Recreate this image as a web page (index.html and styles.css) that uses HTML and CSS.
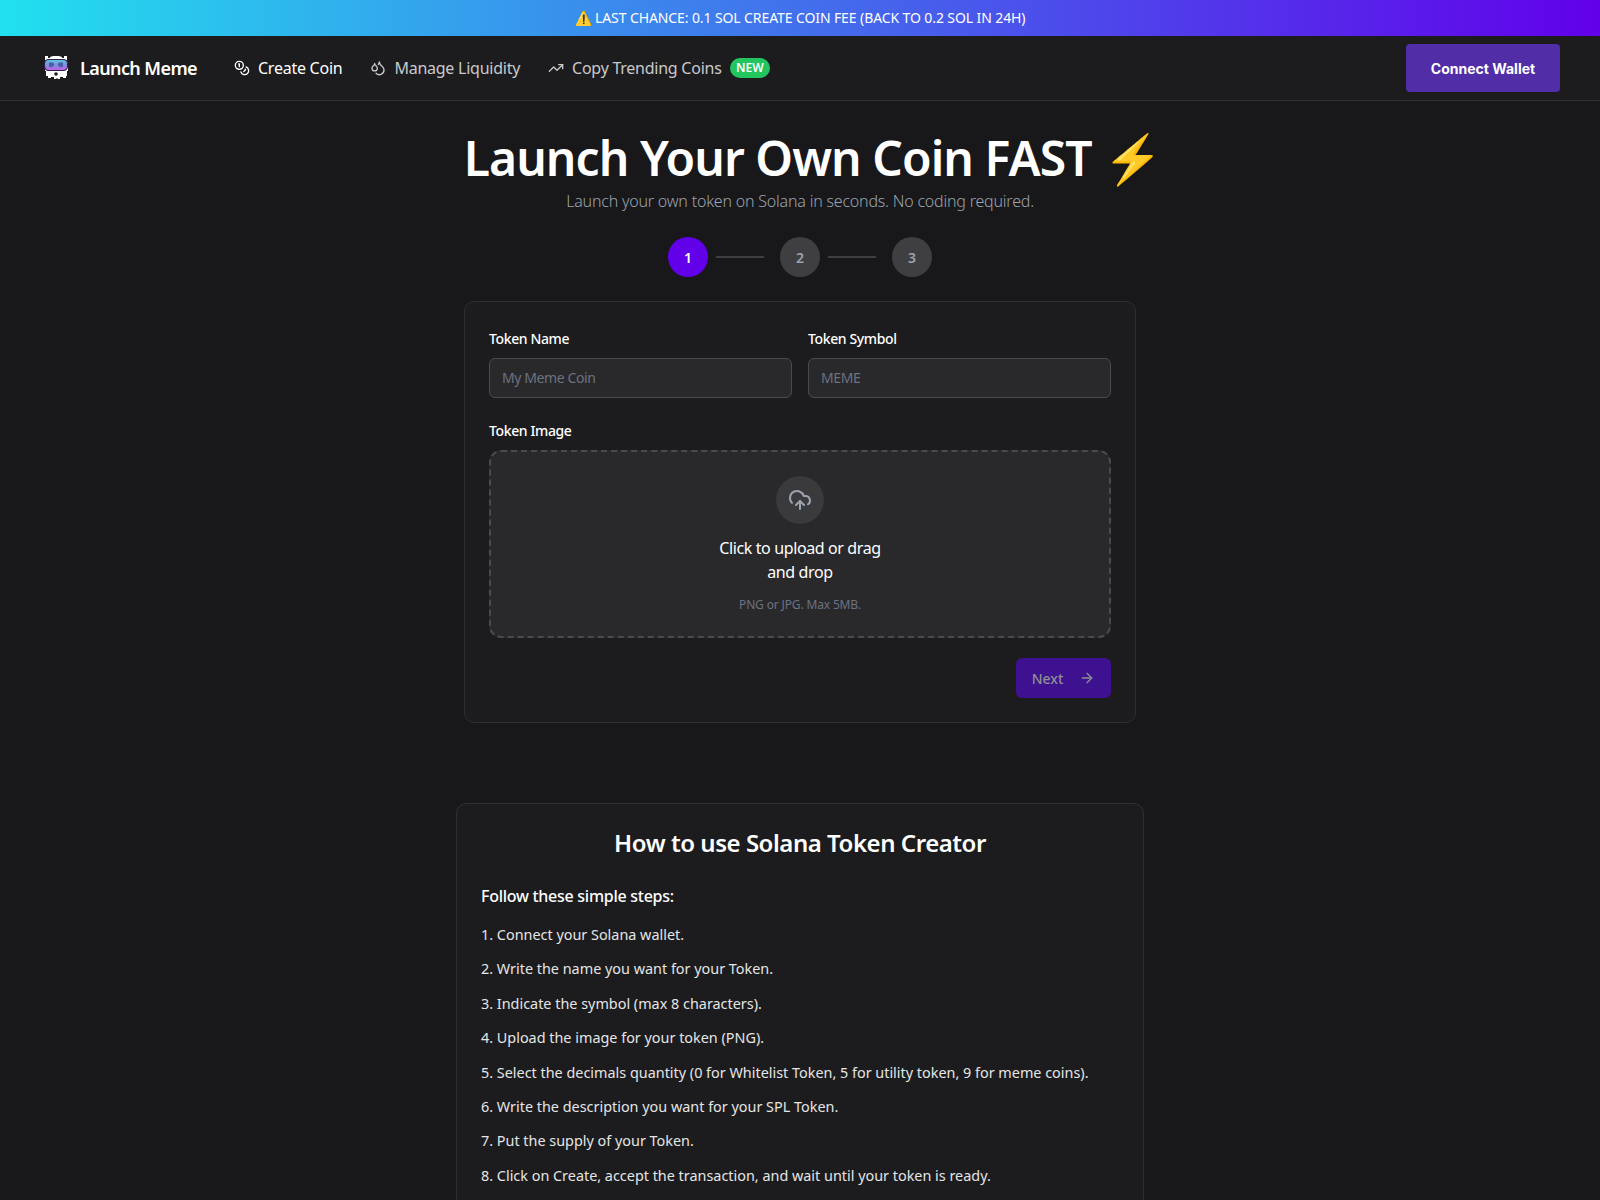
FILE: index.html
```html
<!DOCTYPE html>
<html lang="en">
<head>
    <meta charset="UTF-8">
    <meta name="viewport" content="width=device-width, initial-scale=1.0">
    <title>Launch Meme</title>
    <link rel="stylesheet" href="styles.css">
</head>
<body>
    <div class="promo">⚠️ LAST CHANCE: 0.1 SOL CREATE COIN FEE (BACK TO 0.2 SOL IN 24H)</div>
    <header class="navbar">
        <a class="brand" href="#">
            <svg class="brand-logo" viewBox="0 0 24 24" width="24" height="24">
                <defs>
                    <linearGradient id="goggle" x1="0" y1="0" x2="0" y2="1">
                        <stop offset="0" stop-color="#5fc4e0"/>
                        <stop offset="0.5" stop-color="#7f8fe0"/>
                        <stop offset="1" stop-color="#c45fe6"/>
                    </linearGradient>
                </defs>
                <path fill="#fff" d="M1 0h3v2h2V1l3-1h6l3 1v1h2V0h3v6h1v9h-1v5h-1v2h-3v-1h-3v2h-2l-1-1-1 1h-2v-2H7v1H4v-2H2v-5H1V6H0V6h1z"/>
                <rect x="0" y="3" width="24" height="12" rx="4.500" fill="#2a2048"/>
                <rect x="1" y="4" width="22" height="10" rx="4" fill="url(#goggle)"/>
                <path fill="#4a5fa8" d="M5 6.500h4l1.500 2.500-3 2.500L5 10.500zM15 6.500h4v4l-2.500 1-3-2.500z"/>
                <circle cx="12" cy="18" r="1.800" fill="#1c1c1e"/>
            </svg>
            <span>Launch Meme</span>
        </a>
        <nav class="nav-links">
            <a class="nav-link active" href="#">
                <svg viewBox="0 0 24 24"><circle cx="8" cy="8" r="6"/><path d="M18.090 10.370A6 6 0 1 1 10.340 18"/><path d="M7 6h1v4"/><path d="m16.710 13.880.7.710-2.820 2.820"/></svg>
                Create Coin
            </a>
            <a class="nav-link" href="#">
                <svg viewBox="0 0 24 24"><path d="M7 16.300c2.200 0 4-1.830 4-4.050 0-1.160-.57-2.260-1.710-3.190S7.290 6.750 7 5.300c-.29 1.450-1.140 2.840-2.290 3.760S3 11.100 3 12.250c0 2.220 1.800 4.050 4 4.050z"/><path d="M12.560 6.600A10.970 10.970 0 0 0 14 3.020c.5 2.500 2 4.900 4 6.500s3 3.500 3 5.500a6.980 6.980 0 0 1-11.910 4.970"/></svg>
                Manage Liquidity
            </a>
            <a class="nav-link" href="#">
                <svg viewBox="0 0 24 24"><path d="M22 7l-8.500 8.500-5-5L2 17"/><path d="M16 7h6v6"/></svg>
                Copy Trending Coins
                <span class="badge">NEW</span>
            </a>
        </nav>
        <button class="connect-btn">Connect Wallet</button>
    </header>

    <main class="page">
        <h1>Launch Your Own Coin FAST <span class="bolt">⚡</span></h1>
        <p class="subtitle">Launch your own token on Solana in seconds. No coding required.</p>

        <div class="stepper">
            <span class="step current">1</span>
            <span class="step-line"></span>
            <span class="step">2</span>
            <span class="step-line"></span>
            <span class="step">3</span>
        </div>

        <section class="card form-card">
            <div class="field-row">
                <div class="field">
                    <label for="token-name">Token Name</label>
                    <input id="token-name" type="text" placeholder="My Meme Coin">
                </div>
                <div class="field">
                    <label for="token-symbol">Token Symbol</label>
                    <input id="token-symbol" type="text" placeholder="MEME">
                </div>
            </div>
            <div class="field">
                <label>Token Image</label>
                <div class="dropzone">
                    <span class="upload-icon">
                        <svg viewBox="0 0 24 24"><path d="M12 13v8"/><path d="M4 14.900A7 7 0 1 1 15.710 8h1.790a4.500 4.500 0 0 1 2.500 8.240"/><path d="m8 17 4-4 4 4"/></svg>
                    </span>
                    <p class="drop-text">Click to upload or drag and drop</p>
                    <p class="drop-hint">PNG or JPG. Max 5MB.</p>
                </div>
            </div>
            <div class="form-actions">
                <button class="next-btn">Next
                    <svg viewBox="0 0 24 24"><path d="M5 12h14"/><path d="m12 5 7 7-7 7"/></svg>
                </button>
            </div>
        </section>

        <section class="card guide-card">
            <h2>How to use Solana Token Creator</h2>
            <h3>Follow these simple steps:</h3>
            <ol class="steps">
                <li>1. Connect your Solana wallet.</li>
                <li>2. Write the name you want for your Token.</li>
                <li>3. Indicate the symbol (max 8 characters).</li>
                <li>4. Upload the image for your token (PNG).</li>
                <li>5. Select the decimals quantity (0 for Whitelist Token, 5 for utility token, 9 for meme coins).</li>
                <li>6. Write the description you want for your SPL Token.</li>
                <li>7. Put the supply of your Token.</li>
                <li>8. Click on Create, accept the transaction, and wait until your token is ready.</li>
            </ol>
        </section>
    </main>
</body>
</html>
```

FILE: styles.css
```css
:root {
    --bg-color: #18181b;
    --card-color: #1c1c1e;
    --field-color: #29292c;
    --border-color: #2f2f32;
    --field-border: #4b4b4e;
    --text-color: #fff;
    --muted-color: #9ca3af;
    --faint-color: #6b7280;
    --primary-color: #6200ea;
}

* {
    box-sizing: border-box;
}

html, body {
    height: 1200px;
    overflow: hidden;
}

body {
    margin: 0;
    background-color: var(--bg-color);
    color: var(--text-color);
    font-family: 'Noto Sans', 'Open Sans', sans-serif;
}

a {
    color: inherit;
    text-decoration: none;
}

button {
    border: none;
    font-family: inherit;
}

.promo {
    height: 36px;
    display: flex;
    align-items: center;
    justify-content: center;
    padding-bottom: 1px;
    background: linear-gradient(90deg, #22e0ee, #6200ea);
    font-size: 14px;
    letter-spacing: -0.1px;
}

.navbar {
    height: 65px;
    display: flex;
    align-items: center;
    padding: 0 40px 0 44px;
    background-color: var(--card-color);
    border-bottom: 1px solid var(--border-color);
}

.brand {
    display: flex;
    align-items: center;
    gap: 12px;
    margin-right: 37px;
    font-size: 18px;
    font-weight: 600;
    letter-spacing: -0.6px;
}

.nav-links {
    display: flex;
    align-items: center;
    gap: 28px;
}

.nav-link {
    display: flex;
    align-items: center;
    gap: 8px;
    color: #c9c9cc;
    font-size: 16px;
    letter-spacing: -0.25px;
}

.nav-link.active {
    color: #fff;
}

.nav-link svg {
    width: 16px;
    height: 16px;
    fill: none;
    stroke: currentColor;
    stroke-width: 2;
    stroke-linecap: round;
    stroke-linejoin: round;
}

.badge {
    padding: 2px 6.500px;
    border-radius: 10px;
    background-color: #22c55e;
    color: #fff;
    font-size: 12px;
    font-weight: 600;
    line-height: 16px;
    letter-spacing: 0;
}

.connect-btn {
    margin-left: auto;
    width: 154px;
    height: 48px;
    border-radius: 4px;
    background-color: #512da8;
    color: #fff;
    font-family: Inter, sans-serif;
    font-size: 14px;
    font-weight: 700;
}

.page {
    display: flex;
    flex-direction: column;
    align-items: center;
}

h1 {
    margin: 27px 0 0;
    font-size: 48px;
    font-weight: 600;
    line-height: 60px;
    letter-spacing: -0.94px;
    white-space: nowrap;
}

/* the emoji hangs past the centred text in the original */
.bolt {
    margin-right: -26px;
}

.subtitle {
    margin: 1px 0 0;
    color: var(--muted-color);
    font-size: 16px;
    font-weight: 300;
    line-height: 24px;
    letter-spacing: -0.2px;
}

.stepper {
    display: flex;
    align-items: center;
    gap: 8px;
    margin-top: 24px;
}

.step {
    width: 40px;
    height: 40px;
    display: flex;
    align-items: center;
    justify-content: center;
    border-radius: 50%;
    background-color: #3f3f42;
    color: var(--muted-color);
    font-size: 14px;
    font-weight: 600;
}

.step.current {
    background-color: var(--primary-color);
    color: #fff;
}

.step-line {
    width: 48px;
    height: 2px;
    margin-right: 8px;
    background-color: #3f3f42;
}

.card {
    background-color: var(--card-color);
    border: 1px solid var(--border-color);
    border-radius: 10px;
    padding: 24px;
}

.form-card {
    width: 672px;
    margin-top: 24px;
    display: flex;
    flex-direction: column;
    gap: 20px;
}

.field-row {
    display: grid;
    grid-template-columns: 1fr 1fr;
    gap: 16px;
}

label {
    display: block;
    margin-bottom: 6px;
    font-size: 14px;
    font-weight: 500;
    line-height: 26px;
    letter-spacing: -0.38px;
}

input {
    width: 100%;
    height: 40px;
    padding: 0 12px 2px;
    background-color: var(--field-color);
    border: 1px solid var(--field-border);
    border-radius: 6px;
    color: #fff;
    font-family: inherit;
    font-size: 14px;
    letter-spacing: -0.4px;
}

input::placeholder {
    color: var(--faint-color);
}

.dropzone {
    height: 188px;
    display: flex;
    flex-direction: column;
    align-items: center;
    padding-top: 24px;
    background-color: var(--field-color);
    border: 2px dashed var(--field-border);
    border-radius: 12px;
}

.upload-icon {
    width: 48px;
    height: 48px;
    display: flex;
    align-items: center;
    justify-content: center;
    border-radius: 50%;
    background-color: #3a3a3d;
    color: var(--muted-color);
}

.upload-icon svg {
    width: 24px;
    height: 24px;
    fill: none;
    stroke: currentColor;
    stroke-width: 2;
    stroke-linecap: round;
    stroke-linejoin: round;
}

.drop-text {
    width: 190px;
    margin: 12px 0 0;
    font-size: 16px;
    line-height: 24px;
    letter-spacing: -0.38px;
    text-align: center;
}

.drop-hint {
    margin: 13px 0 0;
    color: var(--faint-color);
    font-size: 12px;
    line-height: 16px;
    letter-spacing: -0.15px;
}

.form-actions {
    display: flex;
    justify-content: flex-end;
}

.next-btn {
    width: 95px;
    height: 40px;
    display: flex;
    align-items: center;
    justify-content: center;
    gap: 16px;
    border-radius: 6px;
    background-color: #3d118f;
    color: #8f8f94;
    font-size: 14px;
    font-weight: 500;
}

.next-btn svg {
    width: 16px;
    height: 16px;
    fill: none;
    stroke: currentColor;
    stroke-width: 2;
    stroke-linecap: round;
    stroke-linejoin: round;
}

.guide-card {
    width: 688px;
    margin-top: 80px;
}

h2 {
    margin: 0;
    font-size: 24px;
    font-weight: 600;
    line-height: 30px;
    letter-spacing: -0.46px;
    text-align: center;
}

h3 {
    margin: 26px 0 0;
    font-size: 16px;
    font-weight: 500;
    line-height: 24px;
    letter-spacing: -0.27px;
}

.steps {
    list-style: none;
    margin: 14px 0 0;
    padding: 0;
    display: flex;
    flex-direction: column;
    gap: 8px;
    color: #e5e5e5;
    font-size: 14.400px;
    line-height: 26.400px;
}
```
